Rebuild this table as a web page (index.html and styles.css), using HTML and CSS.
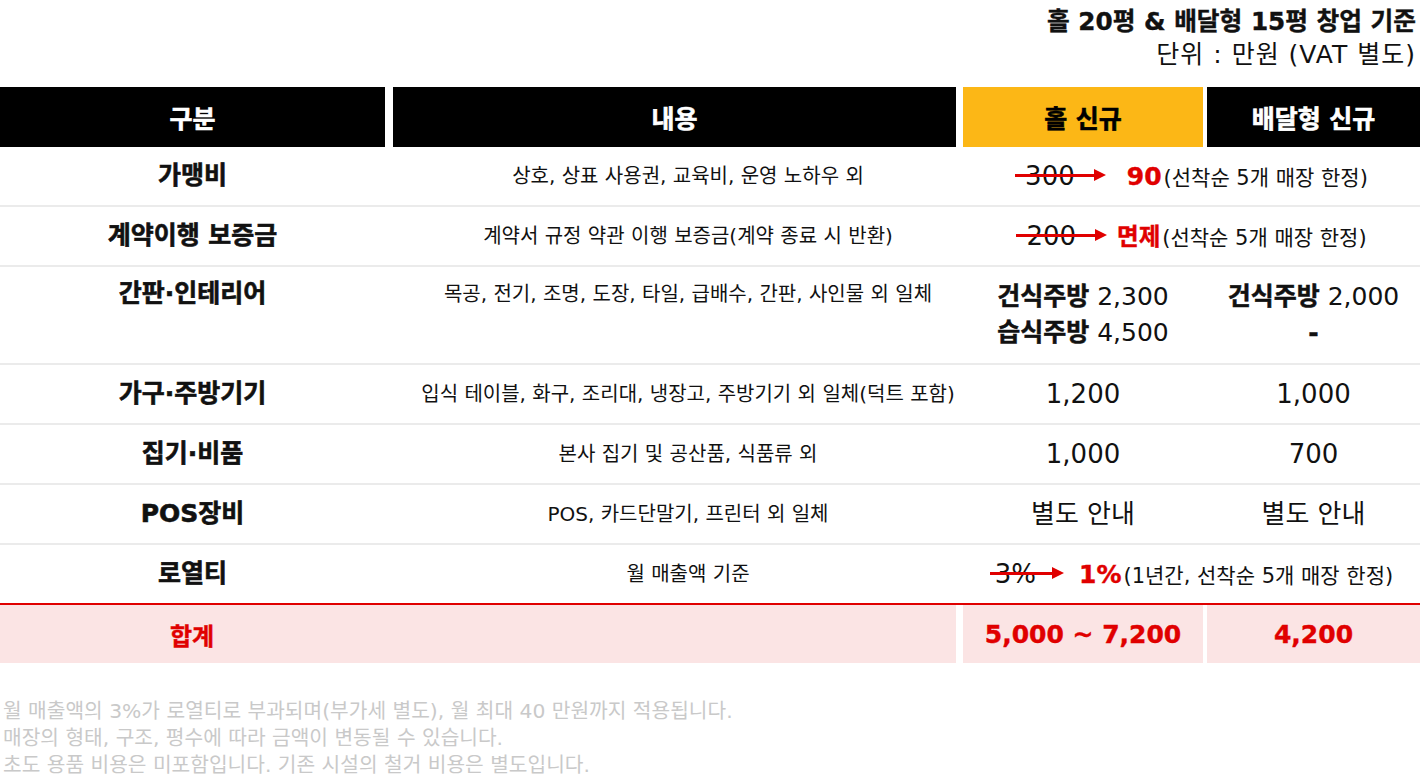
FILE: index.html
```html
<!DOCTYPE html>
<html lang="ko">
<head>
<meta charset="utf-8">
<title>창업 비용</title>
<link rel="stylesheet" href="styles.css">
</head>
<body>
<div class="page">
  <div class="caption">
    <div class="title">홀 20평 &amp; 배달형 15평 창업 기준</div>
    <div class="unit">단위 : 만원 (VAT 별도)</div>
  </div>

  <div class="table">
    <div class="row head">
      <div class="hc c1">구분</div>
      <div class="hc c2">내용</div>
      <div class="hc c3 hall">홀 신규</div>
      <div class="hc c4">배달형 신규</div>
    </div>

    <div class="row">
      <div class="cell label">가맹비</div>
      <div class="cell desc">상호, 상표 사용권, 교육비, 운영 노하우 외</div>
      <div class="cell wide"><span class="was">300</span><b class="now n1">90</b><span class="note">(선착순 5개 매장 한정)</span></div>
    </div>

    <div class="row">
      <div class="cell label">계약이행 보증금</div>
      <div class="cell desc">계약서 규정 약관 이행 보증금(계약 종료 시 반환)</div>
      <div class="cell wide"><span class="was">200</span><b class="now n2">면제</b><span class="note">(선착순 5개 매장 한정)</span></div>
    </div>

    <div class="row tall">
      <div class="cell label">간판·인테리어</div>
      <div class="cell desc">목공, 전기, 조명, 도장, 타일, 급배수, 간판, 사인물 외 일체</div>
      <div class="cell val multi"><div><b>건식주방</b> 2,300</div><div><b>습식주방</b> 4,500</div></div>
      <div class="cell val multi"><div><b>건식주방</b> 2,000</div><div><b>-</b></div></div>
    </div>

    <div class="row">
      <div class="cell label">가구·주방기기</div>
      <div class="cell desc">입식 테이블, 화구, 조리대, 냉장고, 주방기기 외 일체(덕트 포함)</div>
      <div class="cell val">1,200</div>
      <div class="cell val">1,000</div>
    </div>

    <div class="row">
      <div class="cell label">집기·비품</div>
      <div class="cell desc">본사 집기 및 공산품, 식품류 외</div>
      <div class="cell val">1,000</div>
      <div class="cell val">700</div>
    </div>

    <div class="row">
      <div class="cell label">POS장비</div>
      <div class="cell desc">POS, 카드단말기, 프린터 외 일체</div>
      <div class="cell val">별도 안내</div>
      <div class="cell val">별도 안내</div>
    </div>

    <div class="row last">
      <div class="cell label">로열티</div>
      <div class="cell desc">월 매출액 기준</div>
      <div class="cell wide"><span class="was pct">3%</span><b class="now n3">1%</b><span class="note">(1년간, 선착순 5개 매장 한정)</span></div>
    </div>

    <div class="row total">
      <div class="tc t12">합계</div>
      <div class="tc t3">5,000 ~ 7,200</div>
      <div class="tc t4">4,200</div>
    </div>
  </div>

  <div class="notes">
    <p>월 매출액의 3%가 로열티로 부과되며(부가세 별도), 월 최대 40 만원까지 적용됩니다.</p>
    <p>매장의 형태, 구조, 평수에 따라 금액이 변동될 수 있습니다.</p>
    <p>초도 용품 비용은 미포함입니다. 기존 시설의 철거 비용은 별도입니다.</p>
  </div>
</div>
</body>
</html>
```

FILE: styles.css
```css
* { box-sizing: border-box; margin: 0; padding: 0; }

html, body {
  background: #ffffff;
}

body {
  margin: 0;
  font-family: "DejaVu Sans", "Noto Sans CJK KR", sans-serif;
  color: #111111;
}

.page {
  width: 1420px;
}

.caption {
  text-align: right;
  padding-top: 5px;
  height: 87px;
  padding-right: 4px;
}

.title {
  font-size: 24.7px;
  font-weight: 700;
  line-height: 33px;
  -webkit-text-stroke: 0.4px #111111;
}

.unit {
  font-size: 25px;
  font-weight: 400;
  line-height: 34px;
  letter-spacing: 1px;
}

.row {
  display: grid;
  grid-template-columns: 393px 570px 244px 213px;
  border-bottom: 2px solid #ebebeb;
  min-height: 60px;
}

.row.head {
  border-bottom: 0;
}

.hc {
  height: 60px;
  display: flex;
  align-items: center;
  justify-content: center;
  background: #000000;
  color: #ffffff;
  font-size: 25px;
  font-weight: 700;
  -webkit-text-stroke: 0.6px #ffffff;
}

.hc.c1 { margin-right: 8px; }
.hc.c2 { margin-right: 7px; }
.hc.c3 { margin-right: 4px; }

.hc.hall {
  background: #fcb716;
  color: #000000;
  -webkit-text-stroke: 0.6px #000000;
}

.cell {
  text-align: center;
  padding-top: 14px;
  line-height: 30px;
  white-space: nowrap;
}

.cell.label {
  font-size: 25px;
  font-weight: 700;
  padding-right: 8px;
  -webkit-text-stroke: 0.6px #111111;
}

.cell.desc {
  font-size: 20px;
  padding-left: 20px;
}

.cell.val {
  font-size: 26px;
  padding-right: 4px;
}

.cell.val + .cell.val {
  padding-right: 0;
}

.cell.wide {
  grid-column: span 2;
  font-size: 26px;
  font-weight: 400;
}

.row.tall {
  height: 98px;
}

.row.tall .cell {
  padding-top: 12px;
}

.cell.multi {
  line-height: 36px;
  font-size: 25px;
}

.cell.multi b {
  font-weight: 700;
  -webkit-text-stroke: 0.5px #111111;
}

.was {
  position: relative;
  display: inline-block;
  margin-left: 10px;
  margin-right: 31px;
  color: #111111;
}

.was::before {
  content: "";
  position: absolute;
  left: -10px;
  right: -21px;
  top: 50%;
  height: 3px;
  margin-top: -2px;
  background: #e00000;
}

.was::after {
  content: "";
  position: absolute;
  right: -31px;
  top: 50%;
  margin-top: -7px;
  width: 0;
  height: 0;
  border-left: 12px solid #e00000;
  border-top: 6.5px solid transparent;
  border-bottom: 6.5px solid transparent;
}

.was.pct {
  margin-left: 5px;
  margin-right: 28px;
}

.was.pct::before { left: -5px; right: -18px; }
.was.pct::after { right: -28px; }

.now {
  color: #e00000;
  font-weight: 700;
  font-size: 25px;
  -webkit-text-stroke: 0.4px #e00000;
}

.now.n1 { margin-left: 21px; }
.now.n2 { margin-left: 10px; font-size: 23.5px; }
.now.n3 { margin-left: 15px; }

.note {
  font-size: 21px;
  margin-left: 2px;
}

.row.last {
  border-bottom: 2px solid #e00000;
}

.row.total {
  border-bottom: 0;
  height: 58px;
  min-height: 58px;
}

.tc {
  background: #fbe4e4;
  color: #e00000;
  font-weight: 700;
  font-size: 25px;
  display: flex;
  align-items: center;
  justify-content: center;
  -webkit-text-stroke: 0.4px #e00000;
}

.tc.t12 {
  grid-column: span 2;
  margin-right: 7px;
  justify-content: flex-start;
  padding-left: 170px;
  font-size: 24px;
}

.tc.t3 { margin-right: 4px; }

.notes {
  padding-top: 35px;
  padding-left: 3px;
  color: #c9c9c9;
  font-size: 20.3px;
  line-height: 27px;
}
```
